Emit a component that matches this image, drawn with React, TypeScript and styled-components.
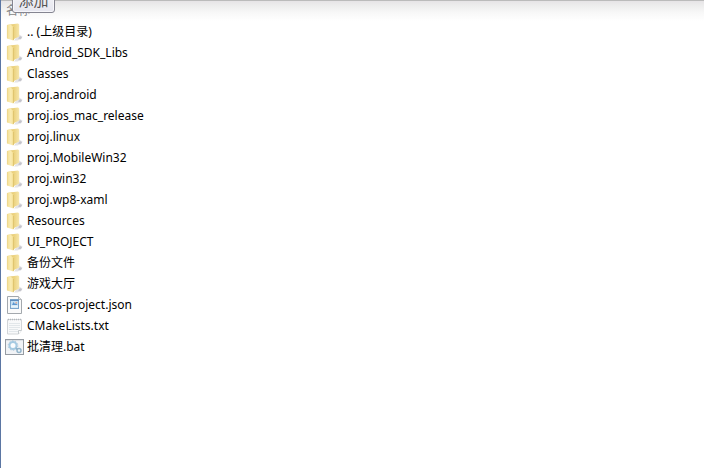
import React from 'react';
import styled, { createGlobalStyle } from 'styled-components';

const GlobalStyle = createGlobalStyle`
  * { box-sizing: border-box; }
  body { margin: 0; background: #fff; overflow: hidden; }
`;

const Panel = styled.main`
  position: relative;
  min-height: 100vh;
  overflow: hidden;
  border-left: 1px solid #5b76a3;
  background: linear-gradient(#bbb 0, #bbb 1px, #e6e4e6 1px, #eeeeee 6px, #f8f8f8 13px, #fff 21px);
  color: #000;
  font-family: 'Noto Sans', 'Noto Sans CJK SC', sans-serif;
  font-size: 12px;
`;

const Header = styled.header`
  height: 21px;
  padding-left: 5px;
  line-height: 21px;
  color: #858585;
`;

const AddButton = styled.button`
  position: absolute;
  top: -14px;
  left: 11px;
  width: 43px;
  height: 27px;
  padding: 0;
  border: 1px solid #858591;
  border-radius: 3px;
  background: linear-gradient(#f6f6f8, #e6e6ef);
  box-shadow: inset 0 0 0 1px #f6f6fa;
  color: #555;
  font-family: 'Noto Sans CJK SC', sans-serif;
  font-size: 15px;
  line-height: 24px;
`;

const FileList = styled.ul`
  margin: 0;
  padding: 0;
  list-style: none;
`;

const FileRow = styled.li`
  display: flex;
  align-items: center;
  height: 21px;
  padding-left: 4px;
  gap: 2px;
`;

const FileLink = styled.a`
  color: inherit;
  line-height: 21px;
  white-space: nowrap;
  text-decoration: none;
`;

const Icon = styled.svg`
  flex: none;
  width: 20px;
  height: 20px;
`;

type Kind = 'folder' | 'json' | 'text' | 'batch';

const FolderIcon = () => (
  <Icon viewBox="0 0 20 20" aria-hidden="true">
    <path d="M9 18.500 14 12.500l3.500 2-1 2.500-4 1.500z" fill="#e4e4e7" />
    <path d="M13 16.500l2-2.500 2 1.200-1.500 2z" fill="#c4c4cb" />
    <path d="M5 2.500 13 1.500l1.200 1V14.500L8 17.500z" fill="url(#folderBack)" />
    <path d="M2 3 5 2l3.500 2.800V18.500L2 16.500z" fill="url(#folderFront)" />
    <path d="M8.500 5v13" stroke="#dcc06a" strokeWidth=".8" fill="none" />
    <path d="M2.400 3.200v13" stroke="#ecd58a" strokeWidth=".8" fill="none" />
  </Icon>
);

const JsonIcon = () => (
  <Icon viewBox="0 0 20 20" aria-hidden="true">
    <path d="M2.500 1.500h11l3 3v14h-14z" fill="#fafafa" stroke="#a3a8ad" />
    <path d="M13.500 1.500v3h3" fill="#e6e6e6" stroke="#b5b8bb" />
    <rect x="5.500" y="4.500" width="8" height="9" fill="#c3dff3" stroke="#7ba5cb" />
    <path d="M5 5.500h9" stroke="#5d8bbb" />
    <path d="m7 10 1.500-3 1.500 2 1-1 1.500 2z" fill="#5d96cf" />
    <path d="M6 11.500h7" stroke="#e8f4fa" strokeWidth="2" />
    <path d="M10.500 7H12v1.500h-1.500z" fill="#e6ae98" />
  </Icon>
);

const TextIcon = () => (
  <Icon viewBox="0 0 20 20" aria-hidden="true">
    <path d="M2.500 3.500h14v11l-3 3.500h-11z" fill="#f8f9fa" stroke="#d2d5d8" />
    <path d="M13.500 18v-3.500h3" fill="#fff" stroke="#c5cacd" />
    <path d="M3 3.500h14" stroke="#b2b7bb" strokeWidth="1.500" strokeDasharray="1 1" />
    <path d="M4 7.500h11M4 9.500h11M4 11.500h11M4 13.500h9M4 15.500h9" stroke="#e2e7ea" />
  </Icon>
);

const BatchIcon = () => (
  <Icon viewBox="0 0 20 20" aria-hidden="true">
    <rect x=".5" y="2.500" width="18" height="15" fill="#f1f3f6" stroke="#969ca3" />
    <path d="M1 3.500h17" stroke="#dce0e4" />
    <circle cx="8" cy="8.500" r="3.500" fill="#fafcfe" stroke="#a5cae2" strokeWidth="2" />
    <circle cx="8" cy="8.500" r="4.800" fill="none" stroke="#9ebfd5" strokeWidth=".8" strokeDasharray="1.500 1.500" />
    <path d="m11 11 3.500 3.500" stroke="#8fb3cb" strokeWidth="2" />
    <circle cx="14" cy="13.500" r="2" fill="#eef5f9" stroke="#93b4ca" strokeWidth="1.500" />
  </Icon>
);

const icons: Record<Kind, React.FC> = {
  folder: FolderIcon,
  json: JsonIcon,
  text: TextIcon,
  batch: BatchIcon,
};

const files: { name: string; kind: Kind }[] = [
  { name: '.. (上级目录)', kind: 'folder' },
  { name: 'Android_SDK_Libs', kind: 'folder' },
  { name: 'Classes', kind: 'folder' },
  { name: 'proj.android', kind: 'folder' },
  { name: 'proj.ios_mac_release', kind: 'folder' },
  { name: 'proj.linux', kind: 'folder' },
  { name: 'proj.MobileWin32', kind: 'folder' },
  { name: 'proj.win32', kind: 'folder' },
  { name: 'proj.wp8-xaml', kind: 'folder' },
  { name: 'Resources', kind: 'folder' },
  { name: 'UI_PROJECT', kind: 'folder' },
  { name: '备份文件', kind: 'folder' },
  { name: '游戏大厅', kind: 'folder' },
  { name: '.cocos-project.json', kind: 'json' },
  { name: 'CMakeLists.txt', kind: 'text' },
  { name: '批清理.bat', kind: 'batch' },
];

const Defs = styled.svg`
  position: absolute;
  width: 0;
  height: 0;
`;

export default function App() {
  return (
    <>
      <GlobalStyle />
      <Defs aria-hidden="true">
        <linearGradient id="folderFront">
          <stop offset="0" stopColor="#f3df94" />
          <stop offset=".6" stopColor="#faecb4" />
          <stop offset="1" stopColor="#f2dc8d" />
        </linearGradient>
        <linearGradient id="folderBack">
          <stop offset="0" stopColor="#e3c468" />
          <stop offset=".5" stopColor="#edd584" />
          <stop offset="1" stopColor="#f6e6ac" />
        </linearGradient>
      </Defs>
      <Panel>
        <Header>名称</Header>
        <AddButton type="button">添加</AddButton>
        <FileList>
          {files.map(({ name, kind }) => {
            const KindIcon = icons[kind];
            return (
              <FileRow key={name}>
                <KindIcon />
                <FileLink href="#">{name}</FileLink>
              </FileRow>
            );
          })}
        </FileList>
      </Panel>
    </>
  );
}
